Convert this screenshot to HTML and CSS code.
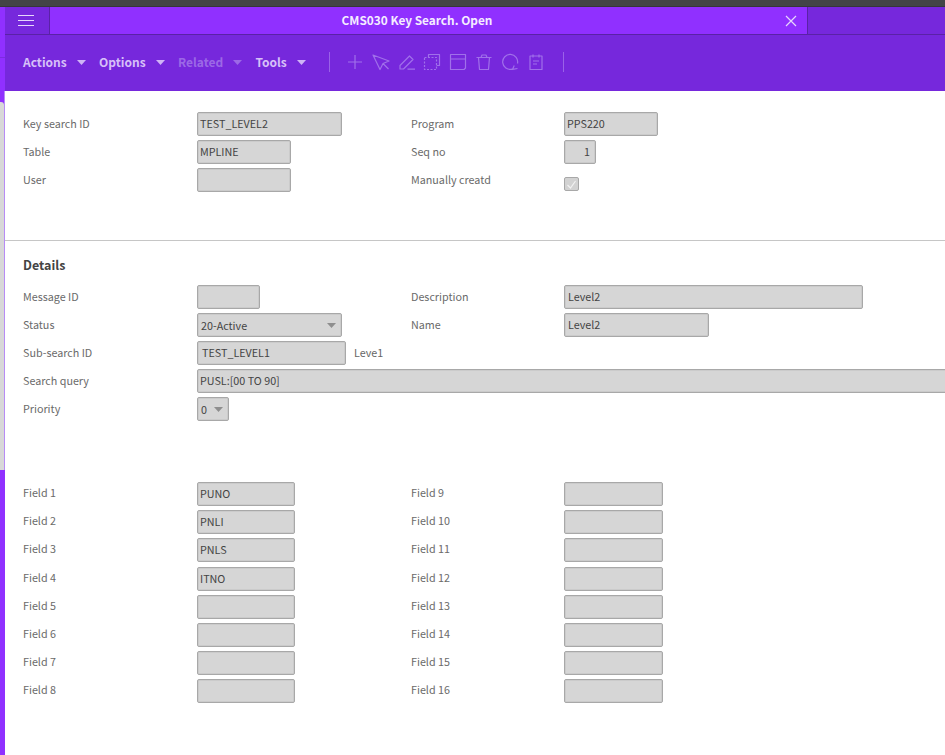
FILE: index.html
```html
<!DOCTYPE html>
<html lang="en">
<head>
<meta charset="utf-8">
<title>CMS030 Key Search. Open</title>
<link rel="stylesheet" href="styles.css">
</head>
<body>
<div class="chrome"></div>
<div class="shell">
  <aside class="side">
    <div class="side-top"></div>
    <div class="side-tab"><div class="side-grey"></div></div>
  </aside>
  <main class="main">
    <header class="titlebar">
      <div class="burger"><span></span><span></span><span></span></div>
      <div class="title">
        <span class="title-text">CMS030 Key Search. Open</span>
        <svg class="close" width="12" height="12" viewBox="0 0 12 12"><path d="M1 1l10 10M11 1L1 11"/></svg>
      </div>
      <div class="title-rest"></div>
    </header>
    <nav class="toolbar">
      <div class="menus">
        <div class="menu"><span>Actions</span><svg class="caret" width="9" height="5" viewBox="0 0 9 5"><path d="M0 0h9L4.500 5z"/></svg></div>
        <div class="menu"><span>Options</span><svg class="caret" width="9" height="5" viewBox="0 0 9 5"><path d="M0 0h9L4.500 5z"/></svg></div>
        <div class="menu off"><span>Related</span><svg class="caret" width="9" height="5" viewBox="0 0 9 5"><path d="M0 0h9L4.500 5z"/></svg></div>
        <div class="menu"><span>Tools</span><svg class="caret" width="9" height="5" viewBox="0 0 9 5"><path d="M0 0h9L4.500 5z"/></svg></div>
      </div>
      <div class="sep"></div>
      <div class="tools">
        <svg class="ico" width="18" height="18" viewBox="0 0 18 18"><path d="M9 2v14M2 9h14"/></svg>
        <svg class="ico" width="18" height="18" viewBox="0 0 18 18"><path d="M1 2l16 6-6 2.500-3 6zM11 10.500l5.500 5.500"/></svg>
        <svg class="ico" width="18" height="18" viewBox="0 0 18 18"><path d="M2 12.500L11.500 3l3.500 3.500L5.500 16H2zM9.500 16.200h7.500"/></svg>
        <svg class="ico" width="18" height="18" viewBox="0 0 18 18"><path d="M5.500 4.500V1.500H16.500V12.500H13.500"/><path class="dash" d="M1.500 4.500h12v12h-12z"/></svg>
        <svg class="ico" width="18" height="18" viewBox="0 0 18 18"><path d="M1.500 1.500h15v13.500l-1.500 1.500H1.500zM1.500 6h15"/></svg>
        <svg class="ico" width="18" height="18" viewBox="0 0 18 18"><path d="M1.500 4.500h15M6 4.500l1-2.500h4l1 2.500M3.500 4.500l1 12h9l1-12"/></svg>
        <svg class="ico" width="18" height="18" viewBox="0 0 18 18"><path d="M11 16.200A7.500 7.500 0 1 1 16.500 10.500M16.500 15.500l-5 .8 1.800-3.800"/></svg>
        <svg class="ico" width="18" height="18" viewBox="0 0 18 18"><path d="M3 3h12v13.500H3zM6 1.500v3M12 1.500v3M6 8h6M6 11h4"/></svg>
      </div>
      <div class="sep sep-end"></div>
    </nav>
    <div class="content">
      <section class="form head-form">
        <div class="label">Key search ID</div><div class="ctl"><div class="field w145">TEST_LEVEL2</div></div>
        <div class="label">Program</div><div class="ctl"><div class="field w94">PPS220</div></div>
        <div class="label">Table</div><div class="ctl"><div class="field w94">MPLINE</div></div>
        <div class="label">Seq no</div><div class="ctl"><div class="field w32 num">1</div></div>
        <div class="label">User</div><div class="ctl"><div class="field w94"></div></div>
        <div class="label">Manually creatd</div><div class="ctl"><div class="check"><svg width="13" height="13" viewBox="0 0 13 13"><path d="M2.500 7l3 3 5-7"/></svg></div></div>
      </section>
      <hr class="divider">
      <h2 class="heading">Details</h2>
      <section class="form">
        <div class="label">Message ID</div><div class="ctl"><div class="field w63"></div></div>
        <div class="label">Description</div><div class="ctl"><div class="field w299 inset">Level2</div></div>
        <div class="label">Status</div><div class="ctl"><div class="field w145 select"><span>20-Active</span><svg class="sel-caret" width="9" height="5" viewBox="0 0 9 5"><path d="M0 0h9L4.500 5z"/></svg></div></div>
        <div class="label">Name</div><div class="ctl"><div class="field w145 inset">Level2</div></div>
        <div class="label">Sub-search ID</div><div class="ctl"><div class="field w149 indent">TEST_LEVEL1</div><span class="note">Leve1</span></div>
        <div class="empty"></div><div class="empty"></div>
        <div class="label">Search query</div><div class="ctl wide"><div class="field full">PUSL:[00 TO 90]</div></div>
        <div class="label">Priority</div><div class="ctl"><div class="field w32 select"><span>0</span><svg class="sel-caret" width="9" height="5" viewBox="0 0 9 5"><path d="M0 0h9L4.500 5z"/></svg></div></div>
      </section>
      <section class="form fields">
        <div class="label">Field 1</div><div class="ctl"><div class="field w98">PUNO</div></div>
        <div class="label">Field 9</div><div class="ctl"><div class="field w99"></div></div>
        <div class="label">Field 2</div><div class="ctl"><div class="field w98">PNLI</div></div>
        <div class="label">Field 10</div><div class="ctl"><div class="field w99"></div></div>
        <div class="label">Field 3</div><div class="ctl"><div class="field w98">PNLS</div></div>
        <div class="label">Field 11</div><div class="ctl"><div class="field w99"></div></div>
        <div class="label">Field 4</div><div class="ctl"><div class="field w98">ITNO</div></div>
        <div class="label">Field 12</div><div class="ctl"><div class="field w99"></div></div>
        <div class="label">Field 5</div><div class="ctl"><div class="field w98"></div></div>
        <div class="label">Field 13</div><div class="ctl"><div class="field w99"></div></div>
        <div class="label">Field 6</div><div class="ctl"><div class="field w98"></div></div>
        <div class="label">Field 14</div><div class="ctl"><div class="field w99"></div></div>
        <div class="label">Field 7</div><div class="ctl"><div class="field w98"></div></div>
        <div class="label">Field 15</div><div class="ctl"><div class="field w99"></div></div>
        <div class="label">Field 8</div><div class="ctl"><div class="field w98"></div></div>
        <div class="label">Field 16</div><div class="ctl"><div class="field w99"></div></div>
      </section>
    </div>
  </main>
</div>
</body>
</html>
```

FILE: styles.css
```css
* { box-sizing: border-box; }
html, body { margin: 0; height: 100%; }
body {
  width: 945px;
  height: 755px;
  overflow: hidden;
  display: flex;
  flex-direction: column;
  background: #fff;
  font-family: "Noto Sans CJK SC", "Noto Sans", sans-serif;
  font-size: 10.750px;
  color: #666;
}
.chrome { height: 7px; flex: none; background: #434447; border-bottom: 1px solid #36373a; }
.shell { flex: 1; display: flex; min-height: 0; }
.side { width: 5px; flex: none; background: #9030ff; display: flex; flex-direction: column; }
.side-top { height: 51px; border-bottom: 1px solid #7d2be0; }
.side-tab {
  height: 379px;
  margin-top: 33px;
  border-right: 1px solid #b78cf5;
  display: flex;
  flex-direction: column;
}
.side-grey { flex: 1; margin-top: 11px; background: #d8d8d8; border-top-right-radius: 3px; }
.main { flex: 1; min-width: 0; display: flex; flex-direction: column; overflow: hidden; }

.titlebar { height: 28px; flex: none; display: flex; border-bottom: 1px solid #5a22a6; background: #7628dc; }
.burger {
  width: 45px;
  flex: none;
  border-right: 1px solid #5a22a6;
  padding-left: 13px;
  display: flex;
  flex-direction: column;
  justify-content: center;
  gap: 4px;
}
.burger span { display: block; width: 16px; height: 1px; background: #e6d6fc; }
.title {
  width: 758px;
  flex: none;
  position: relative;
  background: #9030ff;
  border-right: 1px solid #5a22a6;
  display: flex;
  align-items: center;
  justify-content: center;
  padding-right: 23px;
}
.title-text { font-size: 11.850px; font-weight: 700; line-height: 24px; margin-bottom: 2px; color: #f4ecff; }
.close { position: absolute; right: 10px; top: 8px; }
.close path { stroke: #e6d6fc; stroke-width: 1.2; fill: none; }
.title-rest { flex: 1; }

.toolbar { height: 56px; flex: none; display: flex; align-items: center; padding: 0 0 2px 18px; background: #7628dc; }
.menus { display: flex; gap: 13.400px; width: 306px; }
.menu { display: flex; align-items: center; gap: 10px; font-size: 12px; font-weight: 700; line-height: 20px; color: #d7c0f8; }
.menu.off { color: #9c68e6; }
.caret path { fill: #cfb4f6; }
.menu.off .caret path { fill: #9c68e6; }
.sep { width: 1px; height: 20px; background: #9a62e8; flex: none; }
.tools { display: flex; width: 233px; padding-left: 16px; gap: 7.800px; flex: none; }
.ico { flex: none; }
.ico path { fill: none; stroke: #a070ea; stroke-width: 1.200; stroke-linejoin: round; }
.ico .dash { stroke-dasharray: 2 1.500; }

.content { flex: 1; min-height: 0; padding-top: 21px; overflow: hidden; }
.form {
  display: grid;
  grid-template-columns: 174px 214px 153px 1fr;
  grid-auto-rows: 24px;
  row-gap: 4px;
  padding-left: 18px;
}
.head-form { margin-bottom: 48px; }
.fields { margin-top: 61px; row-gap: 4.200px; }
.label { line-height: 23px; white-space: nowrap; color: #6a6a6a; }
.fields .label { line-height: 21px; }
.ctl { display: flex; align-items: flex-start; gap: 8px; min-width: 0; }
.wide { grid-column: 2 / -1; }
.field {
  height: 24px;
  padding: 0 2px;
  line-height: 21px;
  color: #444;
  white-space: nowrap;
  background: #d6d6d6;
  border: 1px solid #a8a8a8;
  border-radius: 2px;
  box-shadow: inset 0 0 0 1px #cbcbcb;
  flex: none;
}
.w32 { width: 32px; }
.w63 { width: 63px; }
.w94 { width: 94px; }
.w98 { width: 98px; }
.w99 { width: 99px; }
.w145 { width: 145px; }
.w149 { width: 149px; }
.w299 { width: 299px; }
.full { width: calc(100% + 6px); }
.num { text-align: right; padding-right: 5px; }
.indent { padding-left: 4px; }
.inset { padding-left: 3px; }
.select { display: flex; align-items: center; justify-content: space-between; padding: 0 5px 0 3px; }
.sel-caret path { fill: #8e8e8e; }
.note { line-height: 23px; color: #666; }
.check {
  width: 15px;
  height: 14px;
  margin-top: 9px;
  background: #d2d2d2;
  border: 1px solid #a8a8a8;
  border-radius: 2px;
  display: flex;
  align-items: center;
  justify-content: center;
}
.check path { fill: none; stroke: #f2f2f2; stroke-width: 1.200; }
.divider { height: 1px; margin: 0; border: 0; background: #c6c6c6; }
.heading { margin: 16px 0 12px 18px; font-size: 12.500px; font-weight: 700; line-height: 16px; color: #444; }
```
